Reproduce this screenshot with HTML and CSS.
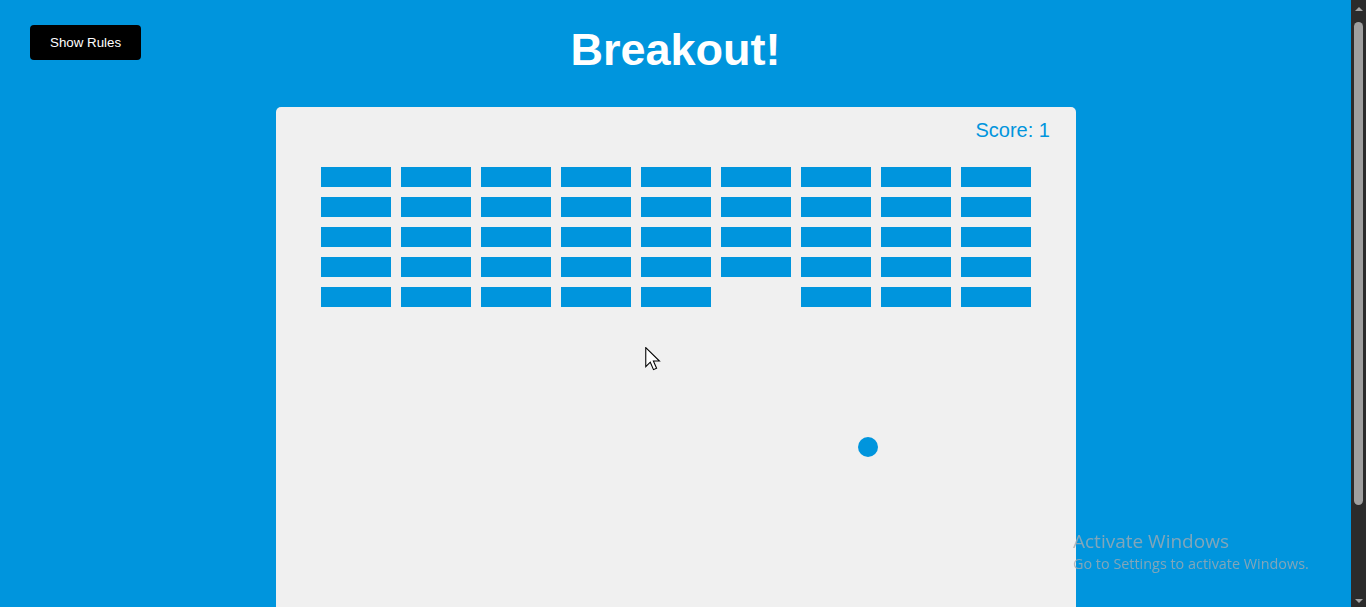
FILE: index.html
```html
<!DOCTYPE html>
<html lang="en">
<head>
<meta charset="UTF-8">
<title>Breakout!</title>
<link rel="stylesheet" href="styles.css">
</head>
<body>
  <button class="btn rules-btn">Show Rules</button>
  <h1 class="title">Breakout!</h1>
  <div class="board">
    <div class="score">Score: 1</div>
    <div class="bricks">
      <div class="brick"></div><div class="brick"></div><div class="brick"></div><div class="brick"></div><div class="brick"></div><div class="brick"></div><div class="brick"></div><div class="brick"></div><div class="brick"></div>
      <div class="brick"></div><div class="brick"></div><div class="brick"></div><div class="brick"></div><div class="brick"></div><div class="brick"></div><div class="brick"></div><div class="brick"></div><div class="brick"></div>
      <div class="brick"></div><div class="brick"></div><div class="brick"></div><div class="brick"></div><div class="brick"></div><div class="brick"></div><div class="brick"></div><div class="brick"></div><div class="brick"></div>
      <div class="brick"></div><div class="brick"></div><div class="brick"></div><div class="brick"></div><div class="brick"></div><div class="brick"></div><div class="brick"></div><div class="brick"></div><div class="brick"></div>
      <div class="brick"></div><div class="brick"></div><div class="brick"></div><div class="brick"></div><div class="brick"></div><div class="brick brick-broken"></div><div class="brick"></div><div class="brick"></div><div class="brick"></div>
    </div>
    <div class="ball"></div>
    <svg class="pointer" width="17" height="25" viewBox="0 0 14 21" aria-hidden="true">
      <path d="M0.5 0.5 L0.5 16.5 L4.3 12.8 L7 19 L9.6 17.9 L6.9 11.8 L12 11.8 Z" fill="#ffffff" stroke="#000000" stroke-width="0.9" stroke-linejoin="miter"/>
    </svg>
  </div>
  <div class="watermark">
    <div class="wm-title">Activate Windows</div>
    <div class="wm-sub">Go to Settings to activate Windows.</div>
  </div>
  <div class="scrollbar" aria-hidden="true">
    <div class="sb-btn"><span class="sb-arrow-up"></span></div>
    <div class="sb-track"><div class="sb-thumb"></div></div>
    <div class="sb-btn"><span class="sb-arrow-down"></span></div>
  </div>
</body>
</html>
```
FILE: styles.css
```css
html {
  overflow: hidden;
}

body {
  margin: 0 15px 0 0;
  padding-bottom: 9px;
  background: #0095dd;
  font-family: "Liberation Sans", Arial, sans-serif;
  display: flex;
  flex-direction: column;
  align-items: center;
}

.btn {
  cursor: pointer;
  background: #000;
  color: #fff;
  border: 0;
  border-radius: 4px;
  padding: 10px 20px;
  font-family: "Liberation Sans", Arial, sans-serif;
  font-size: 13.333px;
  line-height: 15px;
}

.rules-btn {
  position: absolute;
  top: 25px;
  left: 30px;
}

.title {
  margin: 24px 0 31px;
  font-size: 45px;
  line-height: 52px;
  font-weight: bold;
  color: #fff;
}

.board {
  position: relative;
  width: 800px;
  height: 600px;
  flex: none;
  background: #f0f0f0;
  border-radius: 5px;
}

.score {
  height: 60px;
  box-sizing: border-box;
  padding: 12px 0 0 700px;
  font-size: 20px;
  line-height: 23px;
  color: #0095dd;
  white-space: nowrap;
}

.bricks {
  display: grid;
  grid-template-columns: repeat(9, 70px);
  grid-auto-rows: 20px;
  gap: 10px;
  padding-left: 45px;
}

.brick {
  background: #0095dd;
}

.brick-broken {
  visibility: hidden;
}

.ball {
  position: absolute;
  left: 582px;
  top: 330px;
  width: 20px;
  height: 20px;
  border-radius: 50%;
  background: #0095dd;
}

.pointer {
  position: absolute;
  left: 369px;
  top: 240px;
}

.watermark {
  position: fixed;
  left: 1073px;
  top: 528px;
  font-family: "Open Sans", "Noto Sans", sans-serif;
  color: rgba(165, 170, 175, 0.78);
  pointer-events: none;
}

.wm-title {
  font-size: 19px;
  line-height: 26px;
}

.wm-sub {
  font-size: 14.4px;
  line-height: 20px;
}

.scrollbar {
  position: fixed;
  top: 0;
  right: 0;
  width: 15px;
  height: 100vh;
  background: #2b2b2b;
  display: flex;
  flex-direction: column;
}

.sb-btn {
  height: 17px;
  flex: none;
  display: flex;
  align-items: center;
  justify-content: center;
}

.sb-arrow-up {
  width: 0;
  height: 0;
  border-left: 4px solid transparent;
  border-right: 4px solid transparent;
  border-bottom: 4px solid #a3a3a3;
}

.sb-arrow-down {
  width: 0;
  height: 0;
  border-left: 4.5px solid transparent;
  border-right: 4.5px solid transparent;
  border-top: 4px solid #a3a3a3;
  margin-top: 5px;
}

.sb-track {
  flex: 1;
  padding: 5px 3px 0;
}

.sb-thumb {
  width: 9px;
  height: 483px;
  background: #9f9f9f;
  border-radius: 5px;
}
```
